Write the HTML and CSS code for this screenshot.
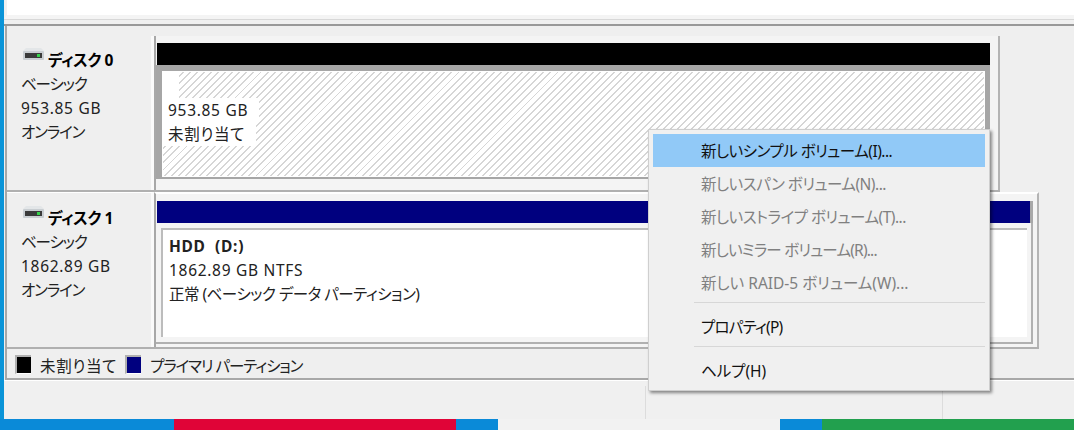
FILE: index.html
```html
<!DOCTYPE html>
<html lang="ja">
<head>
<meta charset="UTF-8">
<title>ディスクの管理</title>
<link rel="stylesheet" href="styles.css">
</head>
<body>

<div class="window">
  <div class="list-area"></div>
  <div class="splitter"></div>

  <div class="disks">
    <div class="disk disk-0">
      <div class="disk-info">
        <div class="disk-name">
          <svg class="disk-icon" width="22" height="12" viewBox="0 0 22 12"><rect x="0" y="3" width="21" height="9" rx="1" fill="#c9ced2"/><path d="M3 0h15l3 3H0z" fill="#e3e6e8"/><rect x="2" y="5" width="17" height="5" fill="#3a3a3a"/><rect x="14" y="6" width="3" height="3" fill="#35d04a"/></svg>
          <b>ディスク 0</b>
        </div>
        <div class="kana">ベーシック</div>
        <div class="latin">953.85 GB</div>
        <div class="kana">オンライン</div>
      </div>
      <div class="disk-volumes">
        <div class="bar bar-black"></div>
        <div class="volume-free">
          <div class="free-inner">
            <span class="blank"></span>
            <div class="free-text latin">953.85 GB</div>
            <div class="free-text latin">未割り当て</div>
          </div>
        </div>
      </div>
    </div>

    <div class="disk disk-1">
      <div class="disk-info">
        <div class="disk-name">
          <svg class="disk-icon" width="22" height="12" viewBox="0 0 22 12"><rect x="0" y="3" width="21" height="9" rx="1" fill="#c9ced2"/><path d="M3 0h15l3 3H0z" fill="#e3e6e8"/><rect x="2" y="5" width="17" height="5" fill="#3a3a3a"/><rect x="14" y="6" width="3" height="3" fill="#35d04a"/></svg>
          <b>ディスク 1</b>
        </div>
        <div class="kana">ベーシック</div>
        <div class="latin">1862.89 GB</div>
        <div class="kana">オンライン</div>
      </div>
      <div class="disk-volumes">
        <div class="bar bar-blue"></div>
        <div class="volume-used">
          <div class="used-inner">
            <div class="latin"><b>HDD&nbsp; (D:)</b></div>
            <div class="latin">1862.89 GB NTFS</div>
            <div class="mixed">正常 (ベーシック データ パーティション)</div>
          </div>
        </div>
      </div>
    </div>
  </div>

  <div class="legend">
    <span class="swatch swatch-black"></span><span class="legend-text latin">未割り当て</span>
    <span class="swatch swatch-blue"></span><span class="legend-text kana">プライマリ パーティション</span>
  </div>

  <div class="statusbar">
    <div class="status-cell status-main"></div>
    <div class="status-cell status-mid"></div>
    <div class="status-cell"></div>
  </div>
</div>

<div class="taskbar">
  <span class="t-blue t-a"></span>
  <span class="t-red"></span>
  <span class="t-blue t-b"></span>
  <span class="t-white"></span>
  <span class="t-blue t-b"></span>
  <span class="t-green"></span>
</div>

<div class="menu">
  <div class="item active">新しいシンプル ボリューム(I)...</div>
  <div class="item off">新しいスパン ボリューム(N)...</div>
  <div class="item off">新しいストライプ ボリューム(T)...</div>
  <div class="item off tight">新しいミラー ボリューム(R)...</div>
  <div class="item off wide">新しい RAID-5 ボリューム(W)...</div>
  <div class="sep"></div>
  <div class="item tight">プロパティ(P)</div>
  <div class="sep"></div>
  <div class="item wide">ヘルプ(H)</div>
</div>

</body>
</html>
```
FILE: styles.css
```css
html, body {
  margin: 0;
  height: 430px;
  overflow: hidden;
}

body {
  position: relative;
  background: #0a94d8;
  font-family: "Noto Sans", "Noto Sans CJK JP", sans-serif;
  font-feature-settings: "palt";
  font-size: 15.5px;
  letter-spacing: .2px;
  line-height: 24px;
  color: #222;
  display: flex;
  flex-direction: column;
}

.latin { letter-spacing: .7px; }
.kana { letter-spacing: -1.1px; }
.mixed { letter-spacing: -.5px; }

.window {
  margin-left: 4px;
  height: 419px;
  flex: none;
  background: #f0f0f0;
  display: flex;
  flex-direction: column;
}

.list-area {
  height: 15px;
  background: #fff;
  border-left: 3px solid #f0f0f0;
  border-bottom: 4px solid #f4f4f4;
  flex: none;
}

.splitter {
  height: 7px;
  background: #f0f0f0;
  border-top: 1px solid #d8d8d8;
  border-bottom: 2px solid #999;
  box-sizing: border-box;
  flex: none;
}

.disks {
  height: 324px;
  margin-left: 1px;
  flex: none;
  border-left: 2px solid #a8a8a8;
  background: #efefef;
  padding-top: 10px;
  box-sizing: border-box;
}

.disk {
  display: flex;
  box-sizing: border-box;
  border-bottom: 2px solid #b0b0b0;
}

.disk-0 {
  height: 156px;
  width: 993px;
}

.disk-1 {
  height: 157px;
  width: 1032px;
}

.disk-info {
  width: 147px;
  flex: none;
  padding: 12px 0 0 14px;
  box-sizing: border-box;
  border-right: 3px solid #fafafa;
}

.disk-1 .disk-info {
  padding-top: 13px;
  border-top: 1px solid #fff;
}

.disk-name {
  display: flex;
  gap: 3px;
  padding-left: 2px;
  color: #000;
  letter-spacing: -.4px;
}

.disk-icon {
  flex: none;
}

.disk-volumes {
  flex: 1;
  border-left: 2px solid #a8a8a8;
  background: #f4f4f4;
  display: flex;
  flex-direction: column;
  box-sizing: border-box;
}

.disk-0 .disk-volumes {
  border-right: 2px solid #b4b4b4;
  padding: 7px 8px 0 0;
}

.disk-1 .disk-volumes {
  border-right: 2px solid #b4b4b4;
  border-top: 2px solid #fff;
  padding: 7px 4px 3px 0;
}

.bar {
  height: 22px;
  flex: none;
  margin-left: 1px;
}

.bar-black { background: #000; }

.bar-blue {
  background: #00007f;
  border-right: 3px solid #a8a8a8;
}

.volume-free {
  flex: 1;
  background: #a6a6a6;
  margin-bottom: 11px;
  padding: 6px 5px 2px 6px;
}

.free-inner {
  height: 100%;
  box-sizing: border-box;
  border: 1px solid #fff;
  background: repeating-linear-gradient(135deg, #fff 0 3.6px, #d6d6d6 3.6px 5px);
}

.blank {
  display: block;
  width: 16px;
  height: 26px;
  background: #fff;
}

.free-text {
  width: fit-content;
  background: #fff;
  padding: 0 11px 0 5px;
}

.volume-used {
  flex: 1;
  padding: 5px 4px 5px 5px;
  border-right: 2px solid #b0b0b0;
  border-bottom: 2px solid #b0b0b0;
}

.used-inner {
  height: 100%;
  box-sizing: border-box;
  background: #fff;
  border-top: 2px solid #bcbcbc;
  border-left: 2px solid #bcbcbc;
  padding: 4px 6px;
}

.legend {
  height: 30px;
  margin-left: 1px;
  box-sizing: border-box;
  border-left: 2px solid #a8a8a8;
  border-bottom: 2px solid #a8a8a8;
  background: #efefef;
  display: flex;
  align-items: center;
  padding: 0 0 0 8px;
}

.swatch {
  width: 16px;
  height: 19px;
  flex: none;
  border-left: 2px solid #b0b0b0;
  border-top: 2px solid #b0b0b0;
  border-bottom: 1px solid #fff;
  box-sizing: border-box;
}

.swatch-black { background: #000; }
.swatch-blue { background: #00007f; }

.legend-text {
  margin: 3px 8px 0 9px;
}

.statusbar {
  flex: 1;
  display: flex;
  border-top: 1px solid #fff;
}

.status-cell {
  flex: 1;
  margin-top: 5px;
  border-right: 1px solid #dcdcdc;
}

.status-main { flex: none; width: 641px; }
.status-mid { flex: none; width: 296px; }
.status-cell:last-child { border-right: none; }

.taskbar {
  flex: 1;
  display: flex;
}

.taskbar span { display: block; height: 100%; }
.t-a { width: 174px; }
.t-b { width: 42px; }
.t-red { width: 282px; background: #e00437; }
.t-blue { background: #0a8ad8; }
.t-white { width: 282px; background: #f2f2f2; }
.t-green { flex: 1; background: #22a04e; }

/* context menu sits over the disks */
.menu {
  position: absolute;
  left: 648px;
  top: 129px;
  width: 342px;
  height: 262px;
  box-sizing: border-box;
  padding: 4px 4px 0 4px;
  background: #f0f0f0;
  border: 1px solid #cfcfcf;
  box-shadow: 2px 2px 3px rgba(0, 0, 0, .45);
  color: #111;
}

.item {
  height: 33px;
  line-height: 34px;
  padding-left: 48px;
  letter-spacing: -.5px;
}

.item.tight { letter-spacing: -.8px; }
.item.wide { letter-spacing: 0; }
.item.active { background: #91c9f7; }
.item.off { color: #808080; }

.sep {
  height: 1px;
  background: #d7d7d7;
  margin: 3px 0 7px 41px;
}
```
